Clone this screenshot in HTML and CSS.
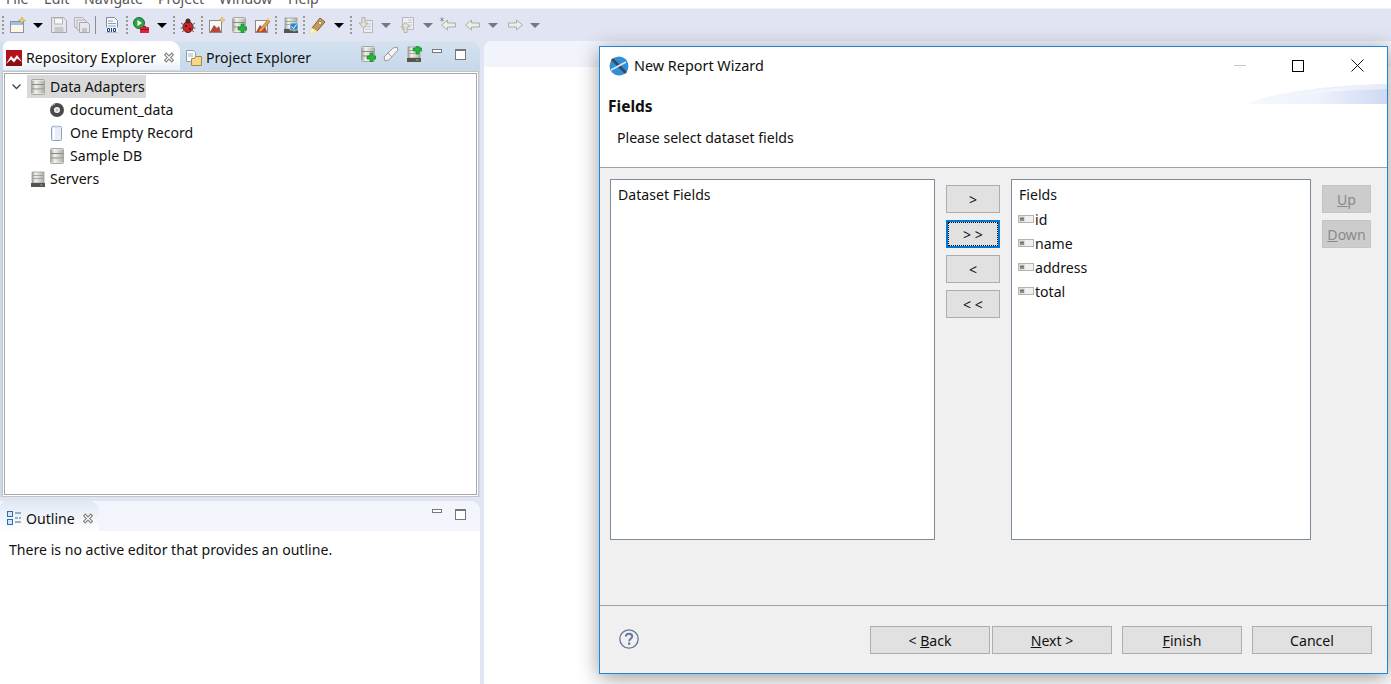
FILE: index.html
```html
<!DOCTYPE html>
<html lang="en">

<head>
    <meta charset="UTF-8">
    <meta name="viewport" content="width=device-width, initial-scale=1.0">
    <title>New Report Wizard</title>
    <link rel="stylesheet" href="styles.css">
</head>

<body>
    <svg class="defs" width="0" height="0">
        <defs>
            <linearGradient id="steel" x1="0" x2="1" y1="0" y2="0">
                <stop offset="0" stop-color="#a9a9a4" />
                <stop offset=".3" stop-color="#f1f1ed" />
                <stop offset="1" stop-color="#b2b2ac" />
            </linearGradient>
            <g id="db">
                <rect x="1.500" y=".5" width="13" height="15" rx="1" fill="#f4f4f0" stroke="#a8a8a2" />
                <rect x="2" y="1.500" width="12" height="4" fill="url(#steel)" />
                <rect x="2" y="6" width="12" height="4" fill="url(#steel)" />
                <rect x="2" y="10.500" width="12" height="4" fill="url(#steel)" />
                <path d="M2 5.500h12M2 10h12" stroke="#8a8a84" />
            </g>
            <g id="server">
                <rect x="2" y="1" width="12" height="11" fill="url(#steel)" stroke="#85857f" stroke-width=".6" />
                <path d="M3 4.500h10M3 7.500h10" stroke="#8b8b85" stroke-width=".7" />
                <rect x="1" y="12" width="14" height="4" fill="#55554f" />
                <rect x="10" y="13.500" width="2.500" height="1" fill="#62c862" />
            </g>
            <g id="field">
                <rect x=".5" y=".5" width="15" height="7" fill="#f1f1f1" stroke="#b4b4b4" />
                <rect x="1" y="1" width="6" height="6" fill="#dcdcdc" />
                <path d="M3 2v4M5 2v4M2 3.500h4M2 5h4" stroke="#555" stroke-width=".7" />
            </g>
            <path id="plus" d="M3 0h3v3h3v3H6v3H3V6H0V3h3z" fill="#22b83a" stroke="#0f7d22" stroke-width=".6" />
            <path id="close" d="M1.500 2.500 3 1l2.500 2.500L8 1l1.500 1.500L7 5l2.500 2.500L8 9 5.500 6.500 3 9 1.500 7.500 4 5z" fill="#fff" stroke="#7f7f7f" />
            <path id="gray-arrow" d="M0 0h10L5 5z" fill="#77777f" />
            <path id="black-arrow" d="M0 0h10L5 5z" fill="#000" />
        </defs>
    </svg>

    <div class="menubar">
        <span class="menu-file">File</span><span class="menu-edit">Edit</span><span class="menu-nav">Navigate</span><span class="menu-project">Project</span><span class="menu-window">Window</span><span class="menu-help">Help</span>
    </div>

    <div class="toolbar">
        <i class="grip"></i>
        <svg class="tool m6" viewBox="0 0 16 16"><rect x=".5" y="4.500" width="13" height="11" fill="#fbf7e4" stroke="#8a94a8" /><rect x="1" y="5" width="12" height="3" fill="#9dc0e8" /><path d="M12 0l1 2.500 2.500 1-2.500 1L12 7l-1-2.500-2.500-1 2.500-1z" fill="#f6d66b" stroke="#b08a2a" stroke-width=".5" /></svg>
        <svg class="caret m7" viewBox="0 0 10 5"><use href="#black-arrow" /></svg>
        <svg class="tool m8" viewBox="0 0 16 16"><path d="M.5.5h12l3 3v12H.5z" fill="#e6e8ee" stroke="#a8a8a8" /><rect x="3.500" y="1" width="8" height="6" fill="#f7f7f7" stroke="#b4b4b4" /><rect x="3.500" y="10" width="9" height="5" fill="#c9c9c9" /></svg>
        <svg class="tool m7" viewBox="0 0 16 16"><path d="M.5.5h8l2 2v8H.5z" fill="#e6e8ee" stroke="#b4b4b4" /><path d="M3 3h8l2 2v8H3z" fill="#e6e8ee" stroke="#b4b4b4" /><path d="M5.500 5.500h8l2 2v8h-10z" fill="#e6e8ee" stroke="#a8a8a8" /><rect x="8" y="11" width="5" height="4" fill="#c4c4c4" /></svg>
        <i class="sep"></i>
        <svg class="tool m8" viewBox="0 0 16 16"><path d="M2.500.5h8l3 3v12h-11z" fill="#f6f7fb" stroke="#7f8ba0" /><path d="M4 4h5M4 6.500h8M4 9h8" stroke="#8ea2bd" /><rect x="2" y="10.500" width="12" height="5" fill="#eef1f7" /><path d="M3.500 11.500h2v3h-2zM9.500 11.500h2v3h-2zM7.500 11v4" fill="none" stroke="#24477a" /></svg>
        <i class="grip g6"></i>
        <svg class="tool m5" viewBox="0 0 16 16"><circle cx="6" cy="6" r="5.500" fill="#2ea24a" stroke="#1b6e30" /><path d="M4.500 3l4.500 3-4.500 3z" fill="#fff" /><rect x="7" y="10" width="9" height="6" fill="#d9233a" /><path d="M7 12.500h9M10 9.500h3" stroke="#8e1020" /></svg>
        <svg class="caret m8" viewBox="0 0 10 5"><use href="#black-arrow" /></svg>
        <i class="grip g6"></i>
        <svg class="tool m5" viewBox="0 0 16 16"><ellipse cx="8" cy="10" rx="5" ry="5.500" fill="#c9252a" stroke="#6e1717" /><circle cx="8" cy="4" r="2.500" fill="#43302c" /><path d="M1 6l3 2M15 6l-3 2M.5 11h3M15.500 11h-3M2 15l2.500-2M14 15l-2.500-2" stroke="#6d5a52" /><circle cx="6" cy="9" r="1" fill="#35100f" /><circle cx="10" cy="12" r="1" fill="#35100f" /></svg>
        <i class="grip g5"></i>
        <svg class="tool m6" viewBox="0 0 16 16"><rect x=".5" y="3.500" width="12" height="12" fill="#f8f8f6" stroke="#8b8b8b" /><path d="M1 15l4-7 3 3 2-2 2 6z" fill="#b34a3c" /><path d="M13 0l.9 2.200L16 3l-2.100.8L13 6l-.9-2.200L10 3l2.100-.8z" fill="#f6d66b" stroke="#b08a2a" stroke-width=".4" /></svg>
        <svg class="tool m6" viewBox="0 0 16 16"><use href="#db" /><use href="#plus" transform="translate(7 7)" /></svg>
        <svg class="tool m8" viewBox="0 0 16 16"><rect x=".5" y="3.500" width="12" height="12" fill="#f8f8f6" stroke="#8b8b8b" /><path d="M1 15l4-7 3 3 2-2 2 6z" fill="#b34a3c" /><path d="M3 14 13 3l2 1.500L6 15z" fill="#e0a84c" stroke="#a13a2a" stroke-width=".6" /><path d="M13 0l.8 1.600 1.700.4-1.700.8-.8 1.700-.8-1.700-1.700-.8 1.700-.4z" fill="#f6d66b" /></svg>
        <i class="grip g4"></i>
        <svg class="tool m6" viewBox="0 0 16 16"><use href="#server" /><rect x="7" y="6" width="8" height="7" fill="#2f86c9" stroke="#fff" stroke-width=".6" /><path d="M8.500 9.500l2 2 3-4" fill="none" stroke="#fff" /></svg>
        <i class="grip g4"></i>
        <svg class="tool wide m4" viewBox="0 0 17 17"><path d="M3 11 11 1l5 4-8 9z" fill="#c89a55" stroke="#7e6238" /><circle cx="11" cy="6" r="1.500" fill="#fff" stroke="#7e6238" stroke-width=".6" /><path d="M0 17l3-6 5 3z" fill="#fff9c4" stroke="#e6d98a" stroke-width=".6" /></svg>
        <svg class="caret m8" viewBox="0 0 10 5"><use href="#black-arrow" /></svg>
        <i class="grip g6"></i>
        <svg class="tool m6" viewBox="0 0 16 16"><path d="M5.500 3.500h9v12h-9z" fill="#eceef3" stroke="#b7b7b7" /><path d="M7 7h6M7 9.500h6M7 12h6" stroke="#c4c8cc" /><path d="M1 6h3V.5h3V6h3l-4.500 5z" fill="#e3e3d6" stroke="#b0b0a8" /></svg>
        <svg class="caret m7" viewBox="0 0 10 5"><use href="#gray-arrow" /></svg>
        <svg class="tool m9" viewBox="0 0 16 16"><path d="M2.500.5h11v12h-11z" fill="#eceef3" stroke="#b7b7b7" /><path d="M8 3h4M8 5.500h4M8 8h4" stroke="#c4c8cc" /><path d="M1 10h3v5.500h3V10h3L5.500 5z" fill="#e3e3d6" stroke="#b0b0a8" /></svg>
        <svg class="caret m7" viewBox="0 0 10 5"><use href="#gray-arrow" /></svg>
        <svg class="tool m7" viewBox="0 0 16 16"><path d="M1.500 8l6-5v3h8v4h-8v3z" fill="#eceee4" stroke="#adadad" /><path d="M.5 1l3 3M3.500 1l-3 3M2 .5v4" stroke="#8b8b8b" /></svg>
        <svg class="tool m9" viewBox="0 0 16 16"><path d="M.5 8l6-5v3h8v4h-8v3z" fill="#eceee4" stroke="#adadad" /></svg>
        <svg class="caret m7" viewBox="0 0 10 5"><use href="#gray-arrow" /></svg>
        <svg class="tool m9" viewBox="0 0 16 16"><path d="M15.500 8l-6-5v3h-8v4h8v3z" fill="#eceee4" stroke="#adadad" /></svg>
        <svg class="caret m7" viewBox="0 0 10 5"><use href="#gray-arrow" /></svg>
    </div>

    <div class="main">
        <div class="left">
            <div class="panel top-panel">
                <div class="tabs">
                    <div class="tab active">
                        <svg class="icon" viewBox="0 0 16 16"><rect width="16" height="16" fill="#b3121d" /><path d="M0 15l5-8 3 3 3-4 5 7v3H0z" fill="#8a0d15" /><path d="M0 14l5-8 3 3 3-4 5 7-5-3.500-3 4-3-3z" fill="#fff" /></svg>
                        <span>Repository Explorer</span>
                        <svg class="close" viewBox="0 0 11 10"><use href="#close" /></svg>
                    </div>
                    <div class="tab other">
                        <svg class="icon" viewBox="0 0 16 16"><path d="M.5.5h7l2 2v9h-9z" fill="#fff" stroke="#8d9bb3" /><path d="M2 4h5M2 6h5" stroke="#9db1cf" /><path d="M5.500 8.500h3l1-2h6v9h-10z" fill="#f5d98a" stroke="#a88a45" /></svg>
                        <span>Project Explorer</span>
                    </div>
                    <div class="view-tools">
                        <svg class="icon" viewBox="0 0 16 16"><use href="#db" /><use href="#plus" transform="translate(7 7)" /></svg>
                        <svg class="icon t1" viewBox="0 0 16 16"><path d="M1 11 10 2l4-1 1 3-9 10-4 1z" fill="#f4f4f4" stroke="#9a9a9a" /><path d="M5 7l4 4" stroke="#9a9a9a" /></svg>
                        <svg class="icon t2" viewBox="0 0 16 16"><use href="#server" /><use href="#plus" transform="translate(7 -1)" /></svg>
                        <i class="min-btn t3"></i>
                        <i class="max-btn t4"></i>
                    </div>
                </div>
                <div class="tree">
                    <div class="tree-row">
                        <svg class="twist" viewBox="0 0 9 6"><path d="M.5.5l4 4 4-4" fill="none" stroke="#444" stroke-width="1.300" /></svg>
                        <div class="selected">
                            <svg class="icon" viewBox="0 0 16 16"><use href="#db" /></svg>
                            <span>Data Adapters</span>
                        </div>
                    </div>
                    <div class="tree-row child">
                        <svg class="icon" viewBox="0 0 16 16"><circle cx="8" cy="8" r="7" fill="#4a4a4a" /><circle cx="8" cy="8" r="3" fill="#f4f4f4" /><circle cx="8" cy="8" r="1.500" fill="#bdbdbd" /><path d="M3 4a6 6 0 0 1 3-2" stroke="#bdbdbd" fill="none" /></svg>
                        <span>document_data</span>
                    </div>
                    <div class="tree-row child">
                        <svg class="icon" viewBox="0 0 16 16"><rect x="2.500" y="1.500" width="10" height="14" rx="1" fill="#e6eef7" stroke="#8da3ba" /><rect x="5" y=".5" width="5" height="2" fill="#c2cfdd" /><rect x="4" y="3" width="2" height="12" fill="#fff" /></svg>
                        <span>One Empty Record</span>
                    </div>
                    <div class="tree-row child">
                        <svg class="icon" viewBox="0 0 16 16"><use href="#db" /></svg>
                        <span>Sample DB</span>
                    </div>
                    <div class="tree-row root">
                        <svg class="icon" viewBox="0 0 16 16"><use href="#server" /></svg>
                        <span>Servers</span>
                    </div>
                </div>
            </div>

            <div class="panel bottom-panel">
                <div class="tabs light">
                    <div class="tab outline">
                        <svg class="icon" viewBox="0 0 16 16"><rect x="1.500" y="1.500" width="5" height="5" fill="#d6e6f7" stroke="#2a6fb0" /><rect x="1.500" y="9.500" width="5" height="5" fill="#d6e6f7" stroke="#2a6fb0" /><path d="M9 3h6M9 8h3M13 8h2M9 12h6" stroke="#3a6a96" /></svg>
                        <span>Outline</span>
                        <svg class="close" viewBox="0 0 11 10"><use href="#close" /></svg>
                    </div>
                    <div class="view-tools">
                        <i class="min-btn"></i>
                        <i class="max-btn t4"></i>
                    </div>
                </div>
                <p class="empty-msg">There is no active editor that provides an outline.</p>
            </div>
        </div>

        <div class="editor">
            <div class="editor-strip"></div>
        </div>
    </div>

    <!-- 对话框窗口 浮在工作台上面 -->
    <div class="wizard">
        <div class="wiz-head">
            <div class="wiz-title">
                <svg class="wiz-logo" viewBox="0 0 20 20"><circle cx="10" cy="10" r="9.500" fill="#2f8fd8" /><path d="M3 3l14 14" stroke="#3a4a5c" stroke-width="3" /><path d="M2 14 17 6" stroke="#d5ecfb" stroke-width="1.500" /></svg>
                <span class="wiz-name">New Report Wizard</span>
                <div class="win-btns">
                    <i class="win-min"></i>
                    <i class="win-max"></i>
                    <svg class="win-close" viewBox="0 0 13 13"><path d="M.5.5l12 12M12.500.5l-12 12" stroke="#111" /></svg>
                </div>
            </div>
            <h1>Fields</h1>
            <p>Please select dataset fields</p>
            <svg class="swoosh" viewBox="0 0 140 20" preserveAspectRatio="none">
                <defs>
                    <linearGradient id="sw" x1="0" x2="1" y1="0" y2="0">
                        <stop offset="0" stop-color="#f6f8fd" />
                        <stop offset=".5" stop-color="#eef2fb" />
                        <stop offset="1" stop-color="#cfd9f3" />
                    </linearGradient>
                </defs>
                <path d="M0 20C20 10 70 2 140 0V20z" fill="url(#sw)" />
                <path d="M60 10C85 7 115 6 140 5V0C105 1 80 4 60 10z" fill="#fff" opacity=".45" />
            </svg>
        </div>

        <div class="wiz-body">
            <div class="list dataset">Dataset Fields</div>
            <div class="move-btns">
                <button class="btn">&gt;</button>
                <button class="btn focused"><span>&gt; &gt;</span></button>
                <button class="btn">&lt;</button>
                <button class="btn">&lt; &lt;</button>
            </div>
            <div class="list fields">
                <div class="field-title">Fields</div>
                <div class="field-row"><svg class="field-icon" viewBox="0 0 16 8"><use href="#field" /></svg>id</div>
                <div class="field-row"><svg class="field-icon" viewBox="0 0 16 8"><use href="#field" /></svg>name</div>
                <div class="field-row"><svg class="field-icon" viewBox="0 0 16 8"><use href="#field" /></svg>address</div>
                <div class="field-row"><svg class="field-icon" viewBox="0 0 16 8"><use href="#field" /></svg>total</div>
            </div>
            <div class="order-btns">
                <button class="btn off"><u>U</u>p</button>
                <button class="btn off"><u>D</u>own</button>
            </div>
        </div>

        <div class="wiz-foot">
            <svg class="help" viewBox="0 0 20 20"><circle cx="10" cy="10" r="9.200" fill="none" stroke="#66779a" stroke-width="1.300" /><path d="M6.800 7.500C7 5.500 8.500 4.800 10 4.800c1.800 0 3.200 1 3.200 2.700 0 2.300-3 2.300-3 4.700" fill="none" stroke="#66779a" stroke-width="2" /><rect x="9" y="13.500" width="2.300" height="2.300" fill="#66779a" /></svg>
            <button class="btn big">&lt; <u>B</u>ack</button>
            <button class="btn big next"><u>N</u>ext &gt;</button>
            <button class="btn big gap10"><u>F</u>inish</button>
            <button class="btn big gap10">Cancel</button>
        </div>
    </div>
</body>

</html>
```

FILE: styles.css
```css
* {
    box-sizing: border-box;
}

html,
body {
    margin: 0;
    padding: 0;
}

body {
    width: 1391px;
    height: 684px;
    overflow: hidden;
    position: relative;
    display: flex;
    flex-direction: column;
    background-color: #e1e5f3;
    font-family: "Noto Sans", "Open Sans", sans-serif;
    font-size: 14.1px;
    color: #111;
}

.defs {
    position: absolute;
}

/* 菜单栏 被截图切掉了上半部分 */
.menubar {
    height: 9px;
    flex: none;
    overflow: hidden;
    background-color: #fff;
    border-bottom: 1px solid #f1f2f9;
    display: flex;
    align-items: flex-end;
    color: #555;
    line-height: 18px;
}

.menubar span {
    flex: none;
    height: 18px;
    padding-left: 6px;
}

.menu-file {
    width: 38px;
}

.menu-edit {
    width: 40px;
}

.menu-nav {
    width: 74px;
}

.menu-project {
    width: 61px;
}

.menu-window {
    width: 69px;
}

/* 工具栏 */
.toolbar {
    height: 32px;
    flex: none;
    display: flex;
    align-items: center;
    padding-left: 2px;
}

.tool {
    width: 16px;
    height: 16px;
    flex: none;
}

.tool.wide {
    width: 17px;
    height: 17px;
}

.caret {
    width: 10px;
    height: 5px;
    flex: none;
}

.grip {
    width: 2px;
    height: 18px;
    flex: none;
    background-image: linear-gradient(#9a9a8e 50%, transparent 50%);
    background-size: 2px 4px;
}

.g4 {
    margin-left: 4px;
}

.g5 {
    margin-left: 5px;
}

.g6 {
    margin-left: 6px;
}

.sep {
    width: 1px;
    height: 18px;
    flex: none;
    margin-left: 5px;
    background-color: #8a8e98;
}

.m4 {
    margin-left: 4px;
}

.m5 {
    margin-left: 5px;
}

.m6 {
    margin-left: 6px;
}

.m7 {
    margin-left: 7px;
}

.m8 {
    margin-left: 8px;
}

.m9 {
    margin-left: 9px;
}

/* 主体 */
.main {
    flex: 1;
    display: flex;
    gap: 4px;
    min-height: 0;
}

.left {
    width: 480px;
    flex: none;
    display: flex;
    flex-direction: column;
    gap: 4px;
}

.panel {
    border-radius: 0 10px 0 0;
}

.top-panel {
    height: 456px;
    flex: none;
    display: flex;
    flex-direction: column;
    background-color: #c9daeb;
    padding-bottom: 2px;
}

.bottom-panel {
    flex: 1;
    background-color: #fff;
}

.tabs {
    height: 29px;
    flex: none;
    display: flex;
    align-items: stretch;
    padding-left: 3px;
    background: linear-gradient(#d5e2f0, #c6d8ea);
    border-radius: 0 10px 0 0;
}

.tabs.light {
    height: 30px;
    padding-left: 0;
    background: #f2f5fb;
}

.tab {
    display: flex;
    align-items: center;
    white-space: nowrap;
    padding-top: 4px;
}

.tab.active {
    width: 177px;
    padding-left: 3px;
    background: linear-gradient(#fff, #fff 60%, #e8eff7);
    border-radius: 6px 10px 0 0;
}

.tab.other {
    padding-left: 6px;
}

.tab.outline {
    width: 99px;
    padding-left: 6px;
    background: linear-gradient(#dfe8f3, #fff);
    border-radius: 6px 10px 0 0;
}

.tab span {
    margin-left: 4px;
}

.close {
    width: 12px;
    height: 11px;
    margin-left: 7px;
    flex: none;
}

.icon {
    width: 16px;
    height: 16px;
    flex: none;
}

.view-tools {
    margin-left: auto;
    display: flex;
    align-items: center;
    padding: 0 14px 3px 0;
}

.t1 {
    margin-left: 7px;
}

.t2 {
    margin-left: 7px;
}

.t3 {
    margin-left: 10px;
}

.t4 {
    margin-left: 13px;
}

.min-btn {
    width: 10px;
    height: 4px;
    flex: none;
    margin-top: -7px;
    border: 1px solid #777;
    background-color: #fff;
}

.max-btn {
    width: 11px;
    height: 11px;
    flex: none;
    border: 1px solid #777;
    border-top-width: 2px;
    background-color: #fff;
}

.tree {
    flex: 1;
    margin: 3px 3px 0 4px;
    padding-top: 1px;
    background-color: #fff;
    border: 1px solid #a8a8a8;
    outline: 1px solid #fff;
    box-shadow: 0 0 0 2px #c4c4c4;
}

.tree-row {
    height: 23px;
    display: flex;
    align-items: center;
    padding-left: 7px;
}

.twist {
    width: 9px;
    height: 6px;
    flex: none;
}

.selected {
    height: 23px;
    margin-left: 6px;
    padding: 0 1px 0 3px;
    display: flex;
    align-items: center;
    gap: 4px;
    background-color: #d9d9d9;
}

.tree-row.child {
    padding-left: 44px;
    gap: 5px;
}

.tree-row.root {
    padding-left: 25px;
    gap: 4px;
}

.empty-msg {
    margin: 9px 0 0 9px;
}

.editor {
    flex: 1;
    background-color: #fff;
    border-radius: 8px 0 0 0;
    overflow: hidden;
}

.editor-strip {
    height: 26px;
    background-color: #f1f4fb;
}

/* 向导窗口 */
.wizard {
    position: absolute;
    left: 599px;
    top: 46px;
    width: 789px;
    height: 628px;
    display: flex;
    flex-direction: column;
    background-color: #f0f0f0;
    border: 1px solid #1f86d9;
    box-shadow: 0 4px 20px rgba(0, 0, 0, .4);
}

.wiz-head {
    height: 121px;
    flex: none;
    position: relative;
    background-color: #fff;
    border-bottom: 1px solid #a0a0a0;
}

.wiz-title {
    height: 37px;
    display: flex;
    align-items: center;
    padding-left: 9px;
}

.wiz-logo {
    width: 20px;
    height: 20px;
    flex: none;
}

.wiz-name {
    margin-left: 5px;
    font-size: 14.4px;
}

.win-btns {
    margin-left: auto;
    display: flex;
    align-items: center;
    padding-right: 23px;
}

.win-min {
    width: 12px;
    height: 1px;
    background-color: #c8c8c8;
}

.win-max {
    width: 12px;
    height: 12px;
    margin-left: 46px;
    border: 1px solid #000;
}

.win-close {
    width: 13px;
    height: 13px;
    margin-left: 47px;
}

.wiz-head h1 {
    margin: 12px 0 0 8px;
    font-size: 15.5px;
    line-height: 20px;
    font-weight: 700;
}

.wiz-head p {
    margin: 12px 0 0 17px;
    line-height: 20px;
}

.swoosh {
    position: absolute;
    right: 0;
    top: 37px;
    width: 140px;
    height: 20px;
}

.wiz-body {
    height: 438px;
    flex: none;
    display: flex;
    align-items: flex-start;
    padding: 11px 0 0 10px;
    border-bottom: 1px solid #a0a0a0;
}

.list {
    height: 361px;
    flex: none;
    background-color: #fff;
    border: 1px solid #7f8c9a;
}

.dataset {
    width: 325px;
    padding: 5px 0 0 7px;
    line-height: 20px;
}

.fields {
    width: 300px;
    padding: 5px 0 0 7px;
}

.field-title {
    line-height: 20px;
    height: 22px;
}

.field-row {
    height: 24px;
    display: flex;
    align-items: center;
    margin-left: -1px;
}

.field-icon {
    width: 16px;
    height: 8px;
    margin-right: 1px;
    flex: none;
}

.btn {
    display: block;
    padding: 0;
    font: inherit;
    color: #111;
    background-color: #e1e1e1;
    border: 1px solid #adadad;
    height: 28px;
    width: 54px;
}

.move-btns {
    width: 54px;
    flex: none;
    margin: 6px 11px 0;
    display: flex;
    flex-direction: column;
    gap: 7px;
}

.focused {
    border: 2px solid #0078d7;
}

.focused span {
    display: block;
    height: 24px;
    line-height: 23px;
    border: 1px dotted #000;
}

.order-btns {
    width: 49px;
    flex: none;
    margin: 6px 0 0 11px;
    display: flex;
    flex-direction: column;
    gap: 7px;
}

.btn.off {
    width: 49px;
    color: #8a8a8a;
    background-color: #ccc;
    border-color: #c4c4c4;
}

.wiz-foot {
    flex: 1;
    display: flex;
    align-items: center;
    padding: 0 15px 0 19px;
}

.help {
    width: 20px;
    height: 20px;
    flex: none;
    margin: -2px auto 0 0;
}

.btn.big {
    width: 120px;
    padding-top: 2px;
}

.next {
    margin-left: 2px;
}

.gap10 {
    margin-left: 10px;
}
```
